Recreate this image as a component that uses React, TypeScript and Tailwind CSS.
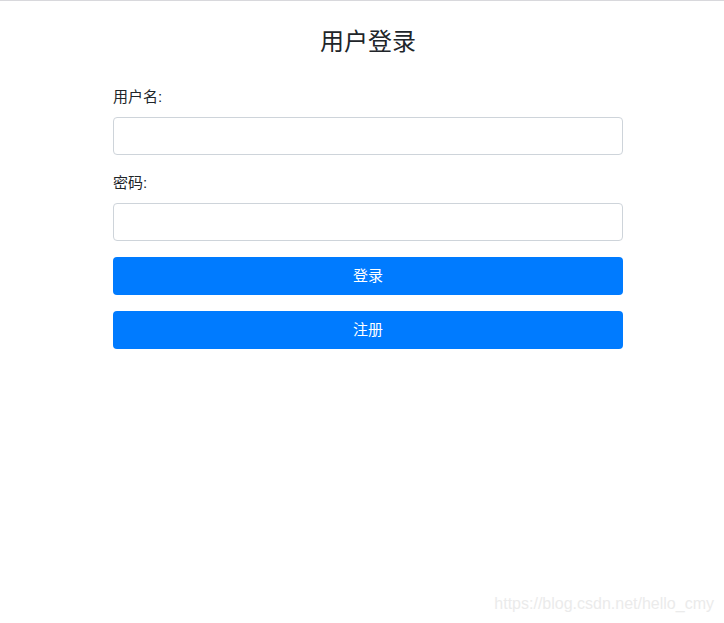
export default function App() {
  return (
    <div
      className="relative h-[623px] w-full overflow-hidden border-t border-[#d8d8dc] bg-white text-[#212529]"
      style={{ fontFamily: '"Liberation Sans", "Noto Sans CJK SC", sans-serif' }}
    >
      <div className="ml-[113px] w-[510px] pt-[26px]">
        <h2 className="mb-[29px] text-center text-[24px] leading-[29px]">用户登录</h2>

        <div className="mb-4">
          <label className="mb-2 block text-[15px] leading-6">用户名:</label>
          <input
            type="text"
            className="block h-[38px] w-full rounded border border-[#ced4da] px-3 outline-none"
          />
        </div>

        <div className="mb-4">
          <label className="mb-2 block text-[15px] leading-6">密码:</label>
          <input
            type="password"
            className="block h-[38px] w-full rounded border border-[#ced4da] px-3 outline-none"
          />
        </div>

        <button className="mb-4 block h-[38px] w-full rounded bg-[#007bff] text-[15px] text-white">
          登录
        </button>
        <button className="block h-[38px] w-full rounded bg-[#007bff] text-[15px] text-white">
          注册
        </button>
      </div>

      {/* watermark */}
      <div
        className="absolute bottom-[7px] right-[10px] text-[16px] text-[#ebebeb]"
        style={{ fontFamily: '"Liberation Sans", Arial, sans-serif' }}
      >
        https://blog.csdn.net/hello_cmy
      </div>
    </div>
  );
}
